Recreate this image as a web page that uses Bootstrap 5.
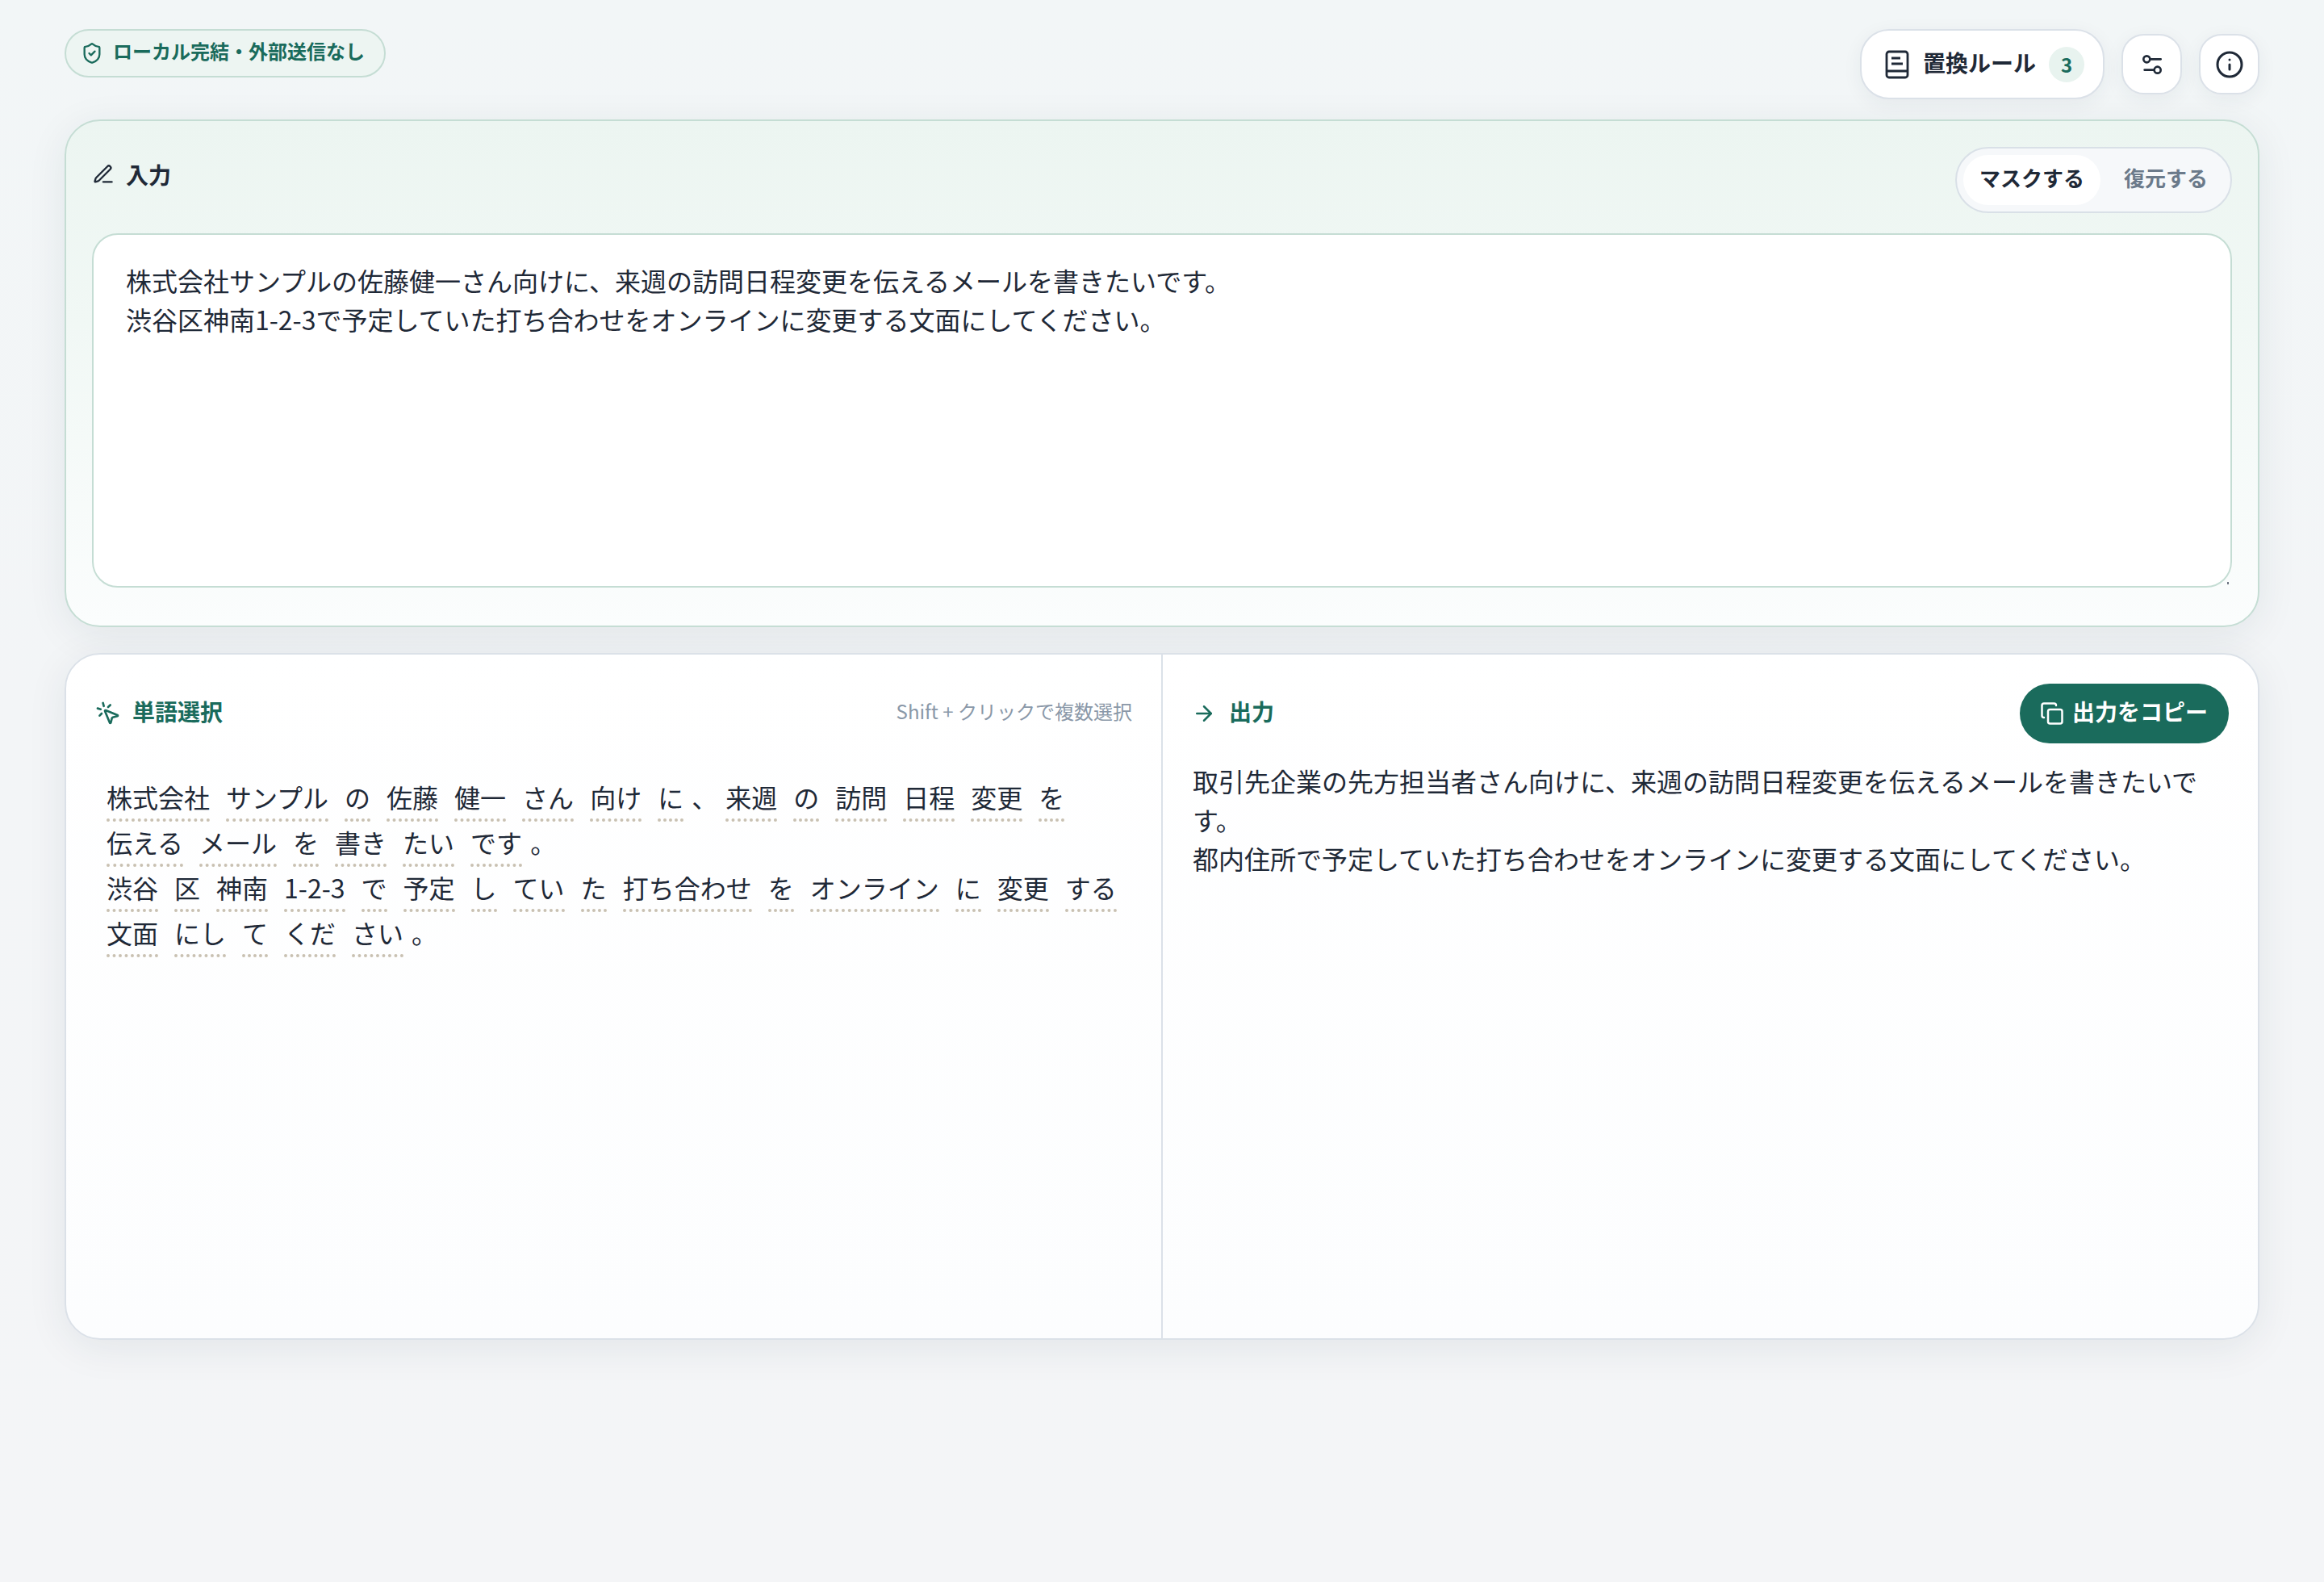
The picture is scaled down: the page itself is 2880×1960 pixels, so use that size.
<!DOCTYPE html>
<html lang="ja">
<head>
    <meta charset="UTF-8">
    <meta name="viewport" content="width=device-width, initial-scale=1.0">
    <title>ローカル完結マスク</title>
    <link rel="stylesheet" href="https://cdn.jsdelivr.net/npm/bootstrap@5.3.0/dist/css/bootstrap.min.css">
    <style>
        html, body { min-height: 100%; }
        body {
            font-family: "Noto Sans CJK JP", sans-serif;
            color: #1f2937;
            background: linear-gradient(180deg, #f2f6f7 0, #f3f5f7 45%, #f4f5f7 100%) no-repeat;
            min-height: 1960px;
            padding: 36px 80px 0;
        }
        svg.ico { fill: none; stroke: currentColor; stroke-width: 2; stroke-linecap: round; stroke-linejoin: round; flex: none; }
        svg.ico-book { stroke-width: 2.800; stroke-linecap: butt; }
        .lift { position: relative; top: -3px; }

        .top-bar { margin-bottom: 25px; }
        .top-actions { gap: 21px; }
        .local-chip {
            height: 60px; padding: 0 24px 0 18px; gap: 12px;
            font-size: 24px; font-weight: 600; color: #1a6b5c;
            background: #edf5f2; border: 2px solid #c5ddd4; border-radius: 30px;
        }
        .rules-btn {
            height: 87px; width: 303px; padding: 0 0 0 26px; gap: 14px;
            font-size: 28px; font-weight: 600; color: #1f2937;
            background: #fff; border: 2px solid #dbe1e8; border-radius: 36px;
            box-shadow: 0 6px 24px rgba(30, 50, 70, .06);
        }
        .rules-count {
            width: 44px; height: 44px; margin-left: 2px;
            font-size: 24px; font-weight: 700; color: #1a6b5c; background: #e8f3ef; border-radius: 50%;
        }
        .icon-btn {
            width: 75px; height: 75px; padding: 0; color: #1f2937;
            background: #fff; border: 2px solid #dbe1e8; border-radius: 28px;
            box-shadow: 0 6px 24px rgba(30, 50, 70, .06);
        }

        .panel-input, .panel-work { box-shadow: 0 10px 50px rgba(30, 50, 70, .08); }
        .panel-input {
            padding: 32px 32px 47px; margin-bottom: 32px;
            background: linear-gradient(180deg, #ecf5f1 0, #f1f8f5 40%, #fbfdfd 100%);
            border: 2px solid #c5ddd4; border-radius: 44px;
        }
        .panel-work {
            min-height: 851px; overflow: hidden;
            background: linear-gradient(180deg, #fff 0, #fcfdfe 100%);
            border: 2px solid #dbe1e8; border-radius: 44px;
        }
        .input-head { margin-bottom: 25px; }
        .input-title { padding-top: 14px; gap: 14px; font-size: 28px; font-weight: 600; line-height: 40px; }
        .mode-toggle { padding: 8px; gap: 9px; background: #f6f8fa; border: 2px solid #d9e0e7; border-radius: 41px; }
        .mode-toggle .btn {
            height: 62px; padding: 0 20px 7px; font-size: 26px; font-weight: 600; color: #6b7a8a;
            border: 0; border-radius: 31px;
        }
        .mode-toggle .btn.on { color: #1f2937; background: #fff; }
        .input-wrap::after {
            content: ""; position: absolute; right: 4px; bottom: 4px; width: 2px; height: 3px; background: #6b7280;
        }
        .input-box.form-control {
            height: 439px; padding: 32px 40px; font-size: 32px; line-height: 48px; color: #1f2937; resize: none;
            background: #fff; border: 2px solid #c5ddd4; border-radius: 32px; box-shadow: none;
        }

        .pane { padding: 36px 36px 34px; }
        .pane-left { width: calc(50% + 1px); border-right: 2px solid #dbe1e8; }
        .pane-right { width: calc(50% - 1px); }
        .pane-head { min-height: 74px; }
        .pane-title { gap: 14px; font-size: 28px; font-weight: 600; color: #1a6b5c; }
        .pane-title.gap-wide { gap: 16px; }
        .pane-hint { font-size: 24px; color: #8a98a8; }
        .copy-btn {
            height: 74px; padding: 0 26px 0 25px; gap: 10px;
            font-size: 28px; font-weight: 600; color: #fff; background: #1a6b5c; border: 0; border-radius: 37px;
        }
        .word-area { margin: 42px 0 0 4px; font-size: 32px; line-height: 48px; }
        .word-item { margin: 0 10px 1px; padding-bottom: 3px; border-bottom: 4px dotted #c9c1b2; }
        .word-mark { height: 55px; margin-bottom: 1px; }
        .output-text { margin-top: 22px; padding-left: 1px; font-size: 32px; line-height: 48px; }
    </style>
</head>
<body>
    <div class="top-bar d-flex justify-content-between align-items-start">
        <div class="local-chip d-inline-flex align-items-center">
            <svg class="ico" width="28" height="28" viewBox="0 0 24 24"><path d="M20 13c0 5-3.500 7.500-7.660 8.950a1 1 0 0 1-.67-.01C7.500 20.500 4 18 4 13V6a1 1 0 0 1 1-1c2 0 4.500-1.200 6.240-2.720a1.170 1.170 0 0 1 1.520 0C14.510 3.810 17 5 19 5a1 1 0 0 1 1 1z"/><path d="m9 12 2 2 4-4"/></svg>
            <span class="lift">ローカル完結・外部送信なし</span>
        </div>
        <div class="d-flex align-items-center top-actions">
            <button type="button" class="btn rules-btn d-inline-flex align-items-center">
                <svg class="ico ico-book" width="36" height="36" viewBox="0 0 36 36"><rect x="5" y="2" width="26" height="32" rx="3"/><path d="M5 26h26M11 10h11M11 17h14"/></svg>
                <span class="lift">置換ルール</span>
                <span class="rules-count d-inline-flex align-items-center justify-content-center">3</span>
            </button>
            <button type="button" class="btn icon-btn d-inline-flex align-items-center justify-content-center">
                <svg class="ico" width="32" height="32" viewBox="0 0 24 24"><path d="M20 7h-9"/><path d="M14 17H5"/><circle cx="17" cy="17" r="3"/><circle cx="7" cy="7" r="3"/></svg>
            </button>
            <button type="button" class="btn icon-btn d-inline-flex align-items-center justify-content-center">
                <svg class="ico" width="36" height="36" viewBox="0 0 24 24"><circle cx="12" cy="12" r="10"/><path d="M12 16v-4"/><path d="M12 8h.01"/></svg>
            </button>
        </div>
    </div>

    <section class="panel-input">
        <div class="input-head d-flex justify-content-between align-items-start">
            <div class="input-title d-flex align-items-center">
                <svg class="ico" width="28" height="28" viewBox="0 0 24 24"><path d="M12 20h9"/><path d="M16.376 3.622a1 1 0 0 1 3.002 3.002L7.368 18.635a2 2 0 0 1-.855.506l-2.872.838a.5.5 0 0 1-.62-.62l.838-2.872a2 2 0 0 1 .506-.854z"/></svg>
                入力
            </div>
            <div class="mode-toggle d-flex" role="group">
                <button type="button" class="btn on">マスクする</button>
                <button type="button" class="btn">復元する</button>
            </div>
        </div>
        <div class="input-wrap position-relative">
            <textarea class="form-control input-box" spellcheck="false">株式会社サンプルの佐藤健一さん向けに、来週の訪問日程変更を伝えるメールを書きたいです。
渋谷区神南1-2-3で予定していた打ち合わせをオンラインに変更する文面にしてください。</textarea>
        </div>
    </section>

    <section class="panel-work d-flex">
        <div class="d-flex w-100">
            <div class="pane pane-left">
                <div class="pane-head d-flex justify-content-between align-items-center">
                    <div class="pane-title d-flex align-items-center">
                        <svg class="ico" width="32" height="32" viewBox="0 0 24 24"><path d="M14 4.100 12 6"/><path d="m5.100 8-2.900-.8"/><path d="m6 12-1.900 2"/><path d="M7.200 2.200 8 5.100"/><path d="M9.037 9.690a.498.498 0 0 1 .653-.653l11 4.500a.5.500 0 0 1-.074.949l-4.349 1.041a1 1 0 0 0-.74.739l-1.040 4.350a.5.500 0 0 1-.95.074z"/></svg>
                        <span class="lift">単語選択</span>
                    </div>
                    <div class="pane-hint lift">Shift + クリックで複数選択</div>
                </div>
                <div class="word-area" id="wordArea"></div>
            </div>
            <div class="pane pane-right">
                <div class="pane-head d-flex justify-content-between align-items-center">
                    <div class="pane-title gap-wide d-flex align-items-center">
                        <svg class="ico" width="30" height="30" viewBox="0 0 24 24"><path d="M5 12h14"/><path d="m12 5 7 7-7 7"/></svg>
                        <span class="lift">出力</span>
                    </div>
                    <button type="button" class="btn copy-btn d-inline-flex align-items-center">
                        <svg class="ico" width="30" height="30" viewBox="0 0 24 24"><rect x="8" y="8" width="14" height="14" rx="2"/><path d="M4 16c-1.100 0-2-.9-2-2V4c0-1.100.9-2 2-2h10c1.100 0 2 .9 2 2"/></svg>
                        <span class="lift">出力をコピー</span>
                    </button>
                </div>
                <div class="output-text">取引先企業の先方担当者さん向けに、来週の訪問日程変更を伝えるメールを書きたいです。<br>都内住所で予定していた打ち合わせをオンラインに変更する文面にしてください。</div>
            </div>
        </div>
    </section>

    <script>
        // 形態素の区切り。句読点は下線なし
        const lines = [
            ['株式会社', 'サンプル', 'の', '佐藤', '健一', 'さん', '向け', 'に', '、', '来週', 'の', '訪問', '日程', '変更', 'を', '伝える', 'メール', 'を', '書き', 'たい', 'です', '。'],
            ['渋谷', '区', '神南', '1-2-3', 'で', '予定', 'し', 'てい', 'た', '打ち合わせ', 'を', 'オンライン', 'に', '変更', 'する', '文面', 'にし', 'て', 'くだ', 'さい', '。']
        ];
        const wordArea = document.getElementById('wordArea');
        lines.forEach(words => {
            const line = document.createElement('div');
            line.className = 'd-flex flex-wrap';
            words.forEach(word => {
                const span = document.createElement('span');
                span.className = (word === '、' || word === '。') ? 'word-mark' : 'word-item';
                span.textContent = word;
                line.appendChild(span);
            });
            wordArea.appendChild(line);
        });
    </script>
    <script src="https://cdn.jsdelivr.net/npm/bootstrap@5.3.0/dist/js/bootstrap.bundle.min.js"></script>
</body>
</html>
